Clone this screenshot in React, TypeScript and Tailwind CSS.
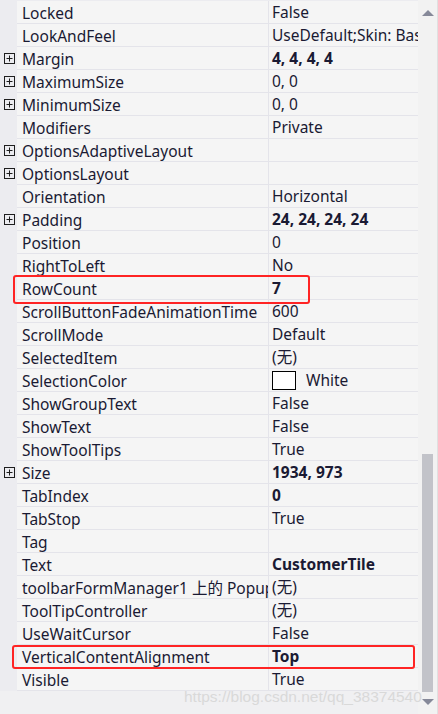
import React from "react";

type Row = { name: string; value?: string; bold?: boolean; plus?: boolean; swatch?: boolean };

const rows: Row[] = [
  { name: "Locked", value: "False" },
  { name: "LookAndFeel", value: "UseDefault;Skin: Basic" },
  { name: "Margin", value: "4, 4, 4, 4", bold: true, plus: true },
  { name: "MaximumSize", value: "0, 0", plus: true },
  { name: "MinimumSize", value: "0, 0", plus: true },
  { name: "Modifiers", value: "Private" },
  { name: "OptionsAdaptiveLayout", plus: true },
  { name: "OptionsLayout", plus: true },
  { name: "Orientation", value: "Horizontal" },
  { name: "Padding", value: "24, 24, 24, 24", bold: true, plus: true },
  { name: "Position", value: "0" },
  { name: "RightToLeft", value: "No" },
  { name: "RowCount", value: "7", bold: true },
  { name: "ScrollButtonFadeAnimationTime", value: "600" },
  { name: "ScrollMode", value: "Default" },
  { name: "SelectedItem", value: "(无)" },
  { name: "SelectionColor", value: "White", swatch: true },
  { name: "ShowGroupText", value: "False" },
  { name: "ShowText", value: "False" },
  { name: "ShowToolTips", value: "True" },
  { name: "Size", value: "1934, 973", bold: true, plus: true },
  { name: "TabIndex", value: "0", bold: true },
  { name: "TabStop", value: "True" },
  { name: "Tag" },
  { name: "Text", value: "CustomerTile", bold: true },
  { name: "toolbarFormManager1 上的 PopupMenu", value: "(无)" },
  { name: "ToolTipController", value: "(无)" },
  { name: "UseWaitCursor", value: "False" },
  { name: "VerticalContentAlignment", value: "Top", bold: true },
  { name: "Visible", value: "True" },
];

function PlusBox() {
  return (
    <svg width="11" height="11" viewBox="0 0 11 11" className="block">
      <rect x="0.5" y="0.5" width="10" height="10" fill="none" stroke="#1e1e1e" strokeWidth="1" />
      <path d="M2.5 5.5h6M5.5 2.5v6" stroke="#1e1e1e" strokeWidth="1" />
    </svg>
  );
}

export default function App() {
  return (
    <div
      className="relative w-[438px] h-[714px] overflow-hidden bg-[#f5f5f5] flex text-[#1a1a33]"
      style={{ fontFamily: '"Noto Sans", "Noto Sans CJK SC", sans-serif' }}
    >
      {/* grid */}
      <div className="w-[418px] flex flex-col">
        <div className="h-[1px] bg-[#ececf0]" />
        {rows.map((r) => (
          <div key={r.name} className="flex h-[23px] text-[15.5px] leading-[24px]">
            <div className="w-[17px] bg-[#ececf0] flex items-center justify-center pl-[1px]">
              {r.plus && <PlusBox />}
            </div>
            <div className="w-[252px] border-b border-r border-[#e4e4ea] pl-[5px] whitespace-nowrap overflow-hidden">
              {r.name}
            </div>
            <div className="flex-1 border-b border-[#e4e4ea] pl-[3px] whitespace-nowrap overflow-hidden flex items-center">
              {r.swatch && (
                <span className="inline-block shrink-0 w-[24px] h-[19px] bg-white border border-black mr-[10px]" />
              )}
              <span className={r.bold ? "font-bold" : ""}>{r.value}</span>
            </div>
          </div>
        ))}
        <div className="flex-1 bg-[#f0f0f2]" />
      </div>

      {/* scrollbar */}
      <div className="w-[20px] bg-[#f2f2f2] border-r border-[#e0e0e0] flex flex-col items-center">
        <svg width="12" height="7" viewBox="0 0 12 7" className="mt-[10px]">
          <path d="M6 0L12 6H0Z" fill="#868999" />
        </svg>
        <div className="flex-1" />
        <div className="w-[11px] h-[238px] bg-[#c2c3c9]" />
        <svg width="12" height="7" viewBox="0 0 12 7" className="mt-[7px] mb-[8px]">
          <path d="M0 0H12L6 6Z" fill="#868999" />
        </svg>
      </div>

      {/* red highlight boxes */}
      <div className="absolute left-[13px] top-[275px] w-[297px] h-[29px] border-2 border-[#ff2424] rounded-[3px]" />
      <div className="absolute left-[12px] top-[645px] w-[403px] h-[24px] border-2 border-[#ff2424] rounded-[3px]" />

      {/* watermark */}
      <div
        className="absolute left-[184px] top-[685px] text-[15.5px] text-[#d9d9d9] whitespace-nowrap"
        style={{ fontFamily: '"Liberation Sans", sans-serif' }}
      >
        https://blog.csdn.net/qq_38374540
      </div>
    </div>
  );
}
